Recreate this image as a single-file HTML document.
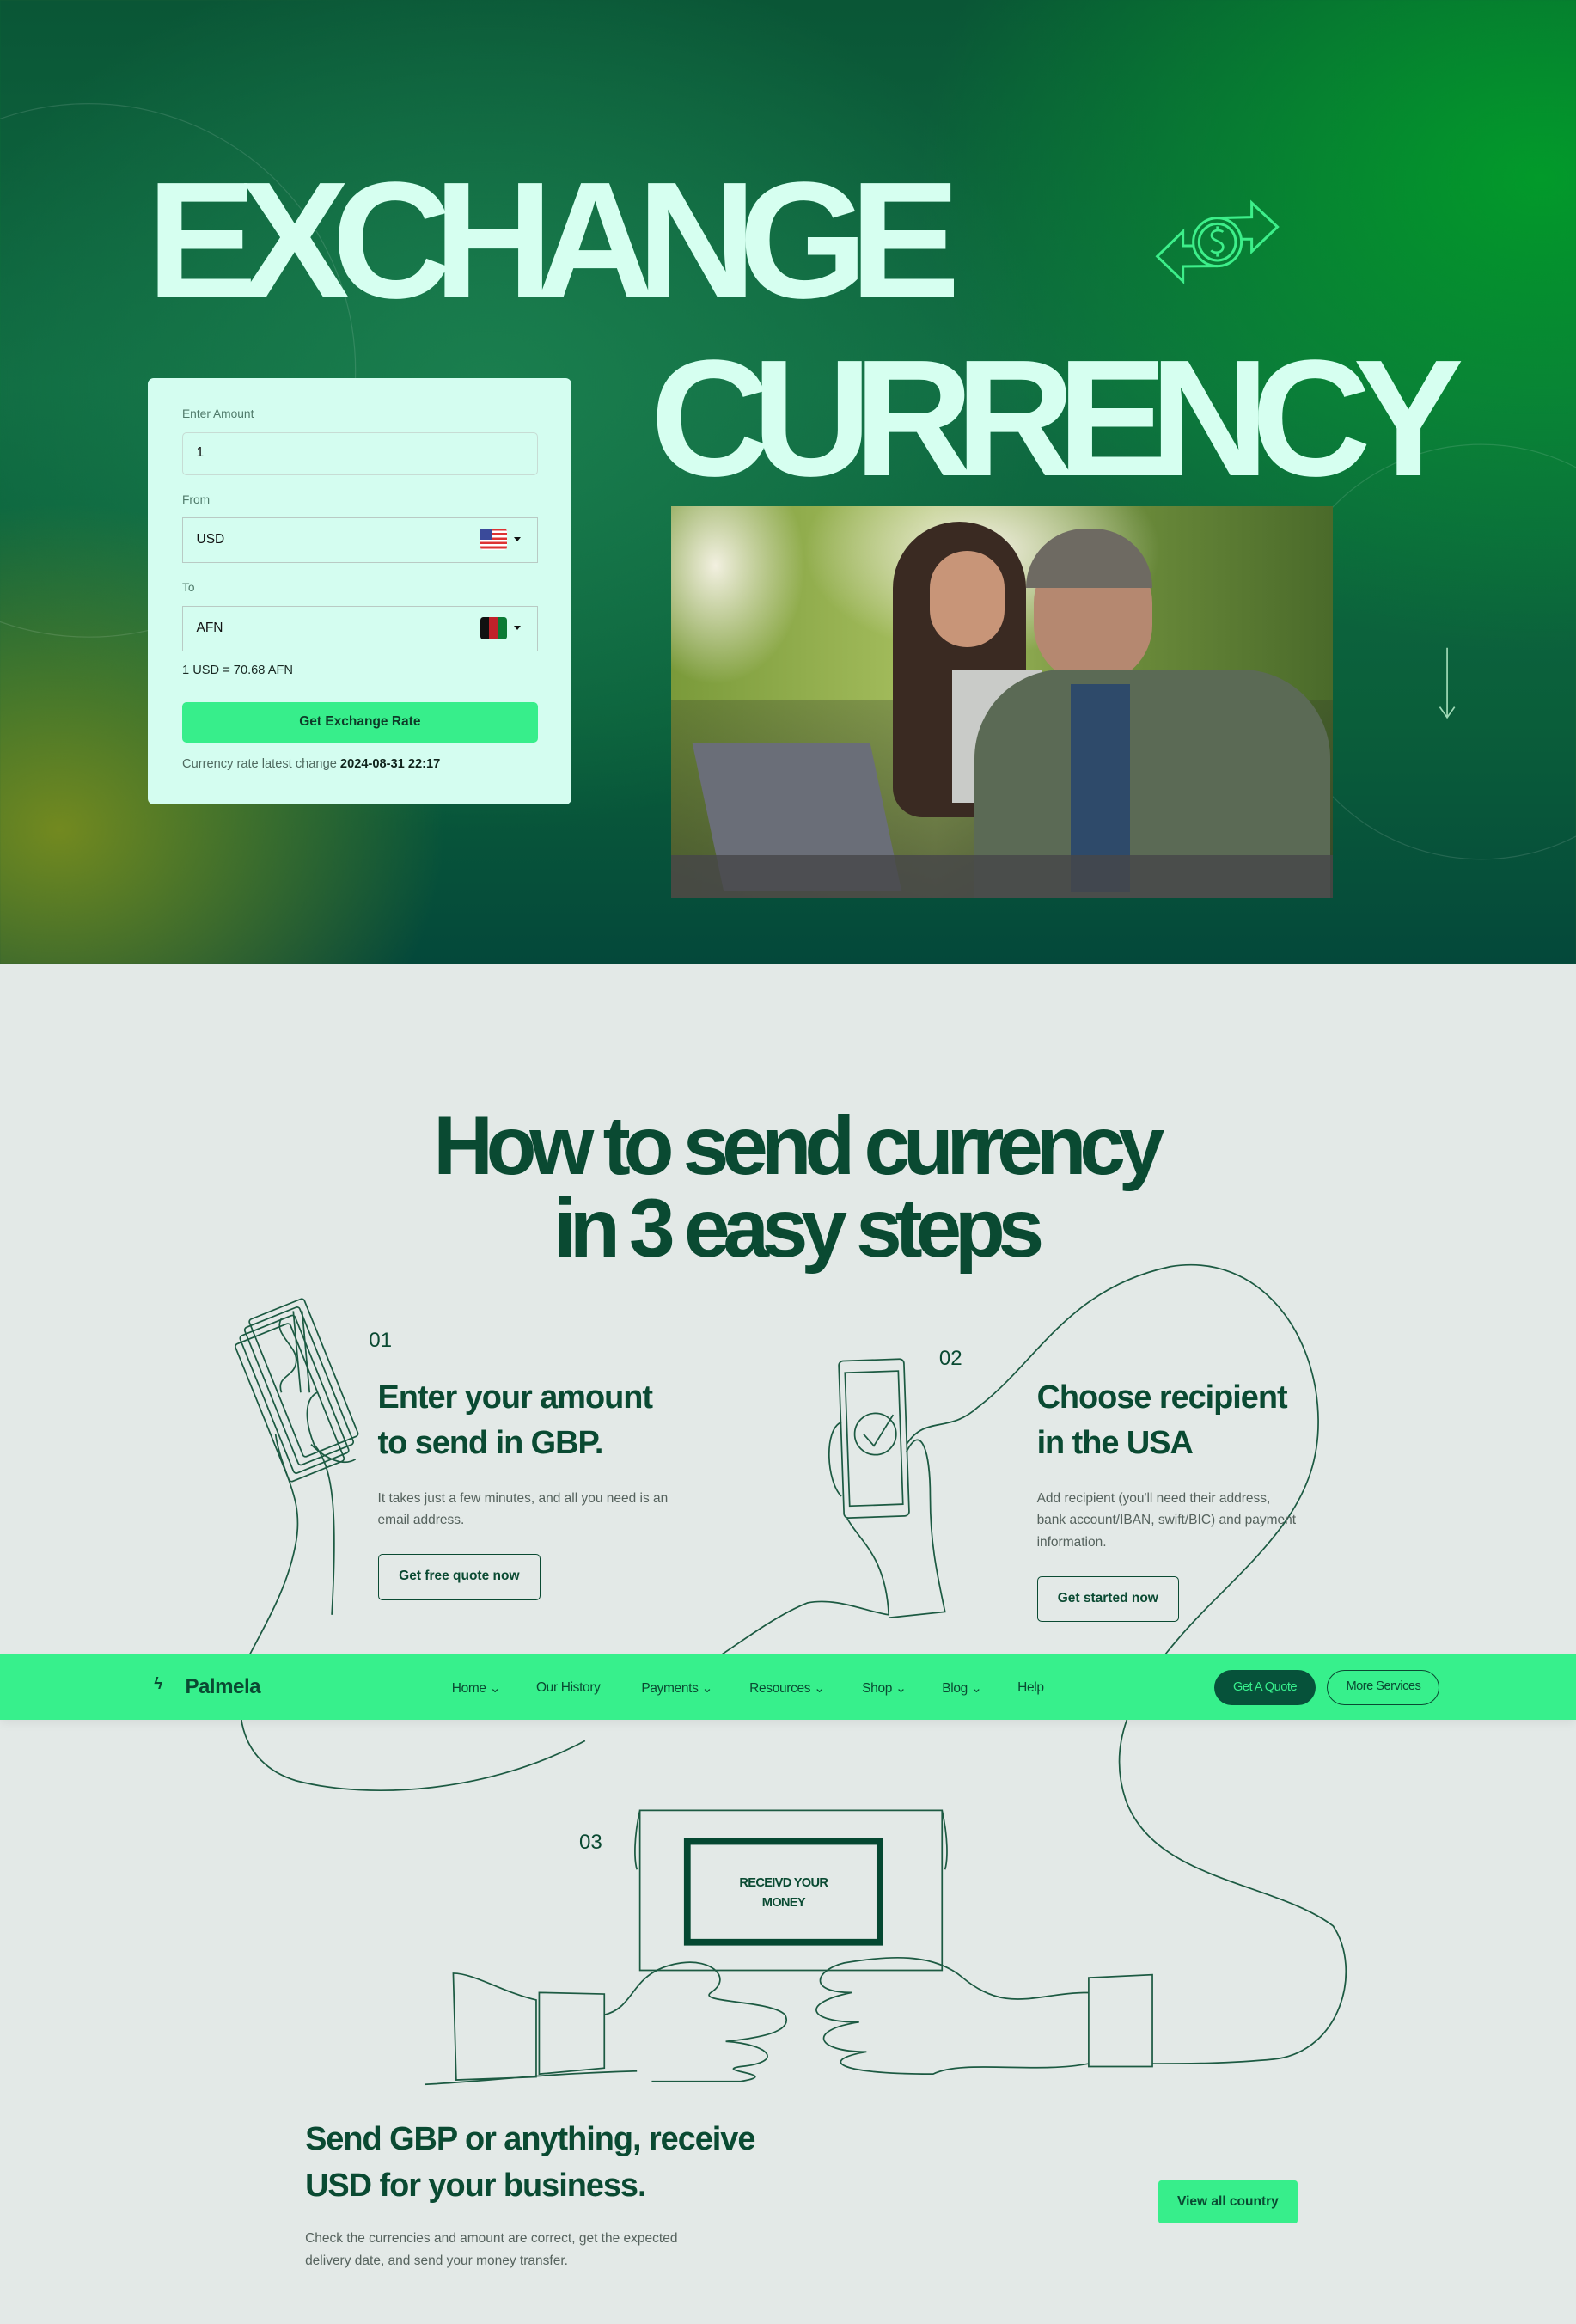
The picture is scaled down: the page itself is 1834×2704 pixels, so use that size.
<!DOCTYPE html>
<html><head><meta charset="utf-8">
<style>
*{margin:0;padding:0;box-sizing:border-box}
html,body{width:1834px;height:2704px;overflow:hidden;background:#e3e9e7}
#z{zoom:1.72368;width:1064px;height:1569px;position:relative;font-family:"Liberation Sans",sans-serif}
.a{position:absolute}
#hero{left:0;top:0;width:1064px;height:651px;overflow:hidden;
background:
radial-gradient(ellipse 260px 220px at 40px 560px,rgba(120,140,30,.95),rgba(120,140,30,0) 100%),
radial-gradient(ellipse 420px 320px at 1040px 120px,#029a2a,rgba(2,154,42,0) 100%),
radial-gradient(ellipse 380px 300px at 330px 260px,#1a7e4e,rgba(26,126,78,0) 100%),
linear-gradient(180deg,#0a5636 0%,#106c42 40%,#0a5e3a 75%,#04483a 100%)}
.big{font-weight:700;color:#d6fff0;font-size:112px;line-height:1;letter-spacing:-12.2px;white-space:nowrap;transform-origin:0 0}
#card{left:100px;top:255px;width:286px;height:288px;background:#d4fdf0;border-radius:4px}
.lbl{font-size:8px;color:#4f7a6a}
.inp{left:23px;width:240px;border:1px solid #c7dcd4;background:#d4fdf0;font-size:9px;color:#111;padding-left:9px}
.sel{height:31px;line-height:29px;border-color:#b9cac4;padding-left:9px}
.flag{position:absolute;right:20px;top:7px;width:18px;height:15px;border-radius:2px}
.car{position:absolute;right:11px;top:13px;border-left:2.5px solid transparent;border-right:2.5px solid transparent;border-top:3px solid #111}
.dk{color:#0a4a32}
h3{font-size:22px;line-height:31px;font-weight:700;color:#0a4a32;letter-spacing:-.6px}
.p{font-size:9px;line-height:15px;color:#55625d}
.btn{border:1px solid #0a4a32;border-radius:3px;font-size:9px;font-weight:700;color:#0a4a32;text-align:center}
.nav{font-size:9px;color:#0a4a32;top:1134px;letter-spacing:-.2px}
</style></head><body><div id="z">
<div id="hero" class="a">
 <svg class="a" style="left:0;top:0" width="1064" height="651">
  <circle cx="60" cy="250" r="180" fill="none" stroke="rgba(255,255,255,.12)" stroke-width=".7"/>
  <circle cx="1000" cy="440" r="140" fill="none" stroke="rgba(255,255,255,.12)" stroke-width=".7"/>
 </svg>
 <div class="a big" style="left:99px;top:106px">EXCHANGE</div>
 <div class="a big" style="left:439px;top:226px">CURRENCY</div>
 <svg class="a" style="left:765.8px;top:121.8px" width="116" height="81.2" viewBox="0 0 600 420" fill="none" stroke="#3def8a" stroke-width="9" stroke-linejoin="miter">
  <circle cx="290" cy="215" r="84"/><circle cx="290" cy="215" r="64"/>
  <path d="M290 131 L410 128 L410 78 L500 162 L410 248 L410 205 L374 205"/>
  <path d="M290 299 L170 300 L170 352 L80 265 L170 178 L170 228 L206 228"/>
  <path d="M310 180 C300 170 270 172 270 192 C270 212 310 210 310 232 C310 254 278 256 268 244 M290 160 V172 M290 252 V266" stroke-width="8"/>
 </svg>
 <svg class="a" style="left:970px;top:436px" width="14" height="52"><path d="M7 1 V48 M2 41 L7 48 L12 41" stroke="#9fd9b6" stroke-width="1" fill="none"/></svg>
 <div id="card" class="a">
  <div class="a lbl" style="left:23px;top:20px">Enter Amount</div>
  <div class="a inp" style="top:37px;height:29px;line-height:27px;border-radius:3px">1</div>
  <div class="a lbl" style="left:23px;top:78px">From</div>
  <div class="a inp sel" style="top:94px">USD<div class="flag" style="background:repeating-linear-gradient(180deg,#d33 0 1.5px,#fff 1.5px 3px)"><div style="width:8px;height:8px;background:#3a4a9a"></div></div><div class="car"></div></div>
  <div class="a lbl" style="left:23px;top:137px">To</div>
  <div class="a inp sel" style="top:154px">AFN<div class="flag" style="background:linear-gradient(90deg,#111 33%,#c0222a 33% 66%,#0a7a35 66%)"></div><div class="car"></div></div>
  <div class="a" style="left:23px;top:193px;font-size:8.5px;color:#1a2a24">1 USD = 70.68 AFN</div>
  <div class="a" style="left:23px;top:219px;width:240px;height:27px;background:#37ee8b;border-radius:3px;text-align:center;line-height:27px;font-size:9px;font-weight:700;color:#0e3a28">Get Exchange Rate</div>
  <div class="a" style="left:23px;top:256px;font-size:8.5px;color:#4f6a60">Currency rate latest change <b style="color:#10241c">2024-08-31 22:17</b></div>
 </div>
 <div class="a" style="left:453px;top:342px;width:447px;height:264px;overflow:hidden;background:
 radial-gradient(ellipse 60px 80px at 30px 40px,#f2f0e0,rgba(242,240,224,0)),
 radial-gradient(ellipse 120px 70px at 210px 30px,#f0eee0,rgba(240,238,224,0)),
 linear-gradient(90deg,#7a9a3a,#a8c060 40%,#6a8a3a 70%,#4a6a2a)">
  <div class="a" style="left:0;top:130px;width:447px;height:134px;background:linear-gradient(180deg,rgba(50,60,40,.3),rgba(40,45,40,.6))"></div>
  <div class="a" style="left:150px;top:10px;width:90px;height:200px;border-radius:45px 45px 20px 20px;background:#3a2a22"></div>
  <div class="a" style="left:175px;top:30px;width:50px;height:65px;border-radius:25px;background:#c89578"></div>
  <div class="a" style="left:190px;top:110px;width:60px;height:90px;background:#c9cbc8"></div>
  <div class="a" style="left:245px;top:25px;width:80px;height:95px;border-radius:40px;background:#b58870"></div>
  <div class="a" style="left:240px;top:15px;width:85px;height:40px;border-radius:40px 40px 0 0;background:#6e6a62"></div>
  <div class="a" style="left:205px;top:110px;width:240px;height:160px;border-radius:60px 60px 0 0;background:#5b6a55"></div>
  <div class="a" style="left:270px;top:120px;width:40px;height:140px;background:#2e4a6a"></div>
  <div class="a" style="left:25px;top:160px;width:120px;height:100px;background:#6a6e78;transform:skewX(12deg)"></div>
  <div class="a" style="left:0;top:235px;width:447px;height:29px;background:rgba(70,70,72,.8)"></div>
 </div>
</div>

<svg class="a" style="left:0;top:0" width="1064" height="1569" fill="none" stroke="#1c5a42" stroke-width="1">
 <g transform="rotate(-22 205 930)">
  <rect x="185" y="880" width="40" height="100" rx="2"/><rect x="180" y="884" width="40" height="100" rx="2"/>
  <rect x="175" y="888" width="40" height="100" rx="2"/><rect x="170" y="892" width="40" height="100" rx="2"/>
 </g>
 <path d="M190 890 C184 900 200 908 200 918 C200 930 186 928 190 940 M198 885 L203 940 M204 885 L209 940" />
 <path d="M186 968 C190 995 205 1010 200 1040 C195 1070 180 1095 168 1118"/>
 <path d="M214 940 C205 945 206 960 212 975 C225 990 228 1020 224 1090"/>
 <path d="M210 975 C220 985 232 990 240 985"/>
 <rect x="568" y="918" width="44" height="106" rx="3" transform="rotate(-2 590 970)"/>
 <rect x="572" y="926" width="36" height="90" transform="rotate(-2 590 970)"/>
 <circle cx="591" cy="968" r="14"/><path d="M583 968 L590 976 L603 955"/>
 <path d="M572 1025 C580 1040 598 1050 600 1090 M612 980 C622 960 628 980 628 1010 C628 1040 632 1060 638 1088 L600 1092 M568 960 C556 965 558 1000 568 1010"/>
 <path d="M487 1117 C505 1105 525 1090 545 1082 C565 1078 585 1088 600 1090 M612 975 C625 955 640 968 660 950 C700 920 720 870 790 855 C850 845 890 900 890 960 C890 1010 860 1040 820 1080 C770 1130 745 1170 760 1215 C780 1270 860 1270 900 1300 C920 1330 905 1385 860 1390 C830 1393 800 1393 778 1393"/>
 <path d="M170 1118 C155 1150 160 1190 200 1202 C250 1215 330 1210 395 1175"/>
 <path d="M432 1222 L636 1222 L636 1330 L432 1330 Z M432 1222 C428 1240 428 1255 430 1262 M636 1222 C640 1240 640 1255 638 1262"/>
 <rect x="464" y="1243" width="130" height="68" stroke-width="4.5" stroke="#054832"/>
 <path d="M306 1332 C320 1332 340 1345 362 1350 L362 1402 L308 1404 Z M364 1345 L408 1346 L408 1396 L364 1400 Z M287 1407 C330 1405 360 1400 430 1398"/>
 <path d="M408 1360 C430 1355 425 1330 460 1325 C480 1322 495 1335 480 1345 C470 1352 520 1350 530 1360 C535 1370 520 1375 490 1378 C520 1380 530 1392 500 1395 C480 1398 530 1400 500 1405 L440 1405"/>
 <path d="M735 1335 L778 1333 L778 1395 L735 1395 Z M735 1345 C700 1345 680 1360 650 1335 C630 1318 600 1320 570 1325 C550 1330 545 1345 575 1345 C540 1352 545 1365 580 1365 C545 1370 550 1385 585 1385 C555 1390 560 1400 630 1400 C650 1390 700 1400 735 1393"/>
</svg>

<div class="a" style="left:0;top:746px;width:1074px;text-align:center;font-size:56px;line-height:56px;font-weight:700;color:#0a4a32;letter-spacing:-4.8px">How to send currency<br>in 3 easy steps</div>

<div class="a dk" style="left:249px;top:897px;font-size:14px">01</div>
<h3 class="a" style="left:255px;top:928px">Enter your amount<br>to send in GBP.</h3>
<div class="a p" style="left:255px;top:1004px">It takes just a few minutes, and all you need is an<br>email address.</div>
<div class="a btn" style="left:255px;top:1049px;width:110px;height:31px;line-height:29px">Get free quote now</div>

<div class="a dk" style="left:634px;top:909px;font-size:14px">02</div>
<h3 class="a" style="left:700px;top:928px">Choose recipient<br>in the USA</h3>
<div class="a p" style="left:700px;top:1004px">Add recipient (you'll need their address,<br>bank account/IBAN, swift/BIC) and payment<br>information.</div>
<div class="a btn" style="left:700px;top:1064px;width:96px;height:31px;line-height:29px">Get started now</div>

<div class="a" style="left:0;top:1117px;width:1064px;height:44px;background:#37f08c;box-shadow:0 3px 6px rgba(0,0,0,.06)"></div>
<div class="a dk" style="left:104px;top:1131px;font-size:11px;font-weight:700">ϟ</div>
<div class="a dk" style="left:125px;top:1131px;font-size:14px;font-weight:700;letter-spacing:-.3px">Palmela</div>
<div class="a nav" style="left:305px">Home ⌄</div>
<div class="a nav" style="left:362px">Our History</div>
<div class="a nav" style="left:433px">Payments ⌄</div>
<div class="a nav" style="left:506px">Resources ⌄</div>
<div class="a nav" style="left:582px">Shop ⌄</div>
<div class="a nav" style="left:636px">Blog ⌄</div>
<div class="a nav" style="left:687px">Help</div>
<div class="a" style="left:820px;top:1127px;width:68px;height:24px;border-radius:12px;background:#06523a;color:#37f08c;font-size:8.5px;text-align:center;line-height:24px;letter-spacing:-.3px">Get A Quote</div>
<div class="a" style="left:896px;top:1127px;width:76px;height:24px;border-radius:12px;border:1px solid #0a4a32;color:#0a4a32;font-size:8.5px;text-align:center;line-height:22px;letter-spacing:-.3px">More Services</div>

<div class="a dk" style="left:391px;top:1236px;font-size:14px">03</div>
<div class="a" style="left:466px;top:1265px;width:126px;text-align:center;font-size:8.5px;line-height:13px;font-weight:700;color:#0a4a32;letter-spacing:-.4px">RECEIVD YOUR<br>MONEY</div>

<h3 class="a" style="left:206px;top:1429px">Send GBP or anything, receive<br>USD for your business.</h3>
<div class="a p" style="left:206px;top:1504px">Check the currencies and amount are correct, get the expected<br>delivery date, and send your money transfer.</div>
<div class="a" style="left:782px;top:1472px;width:94px;height:29px;background:#37ee8b;border-radius:2px;font-size:9px;font-weight:700;color:#0a4a32;text-align:center;line-height:29px">View all country</div>
</div></body></html>
